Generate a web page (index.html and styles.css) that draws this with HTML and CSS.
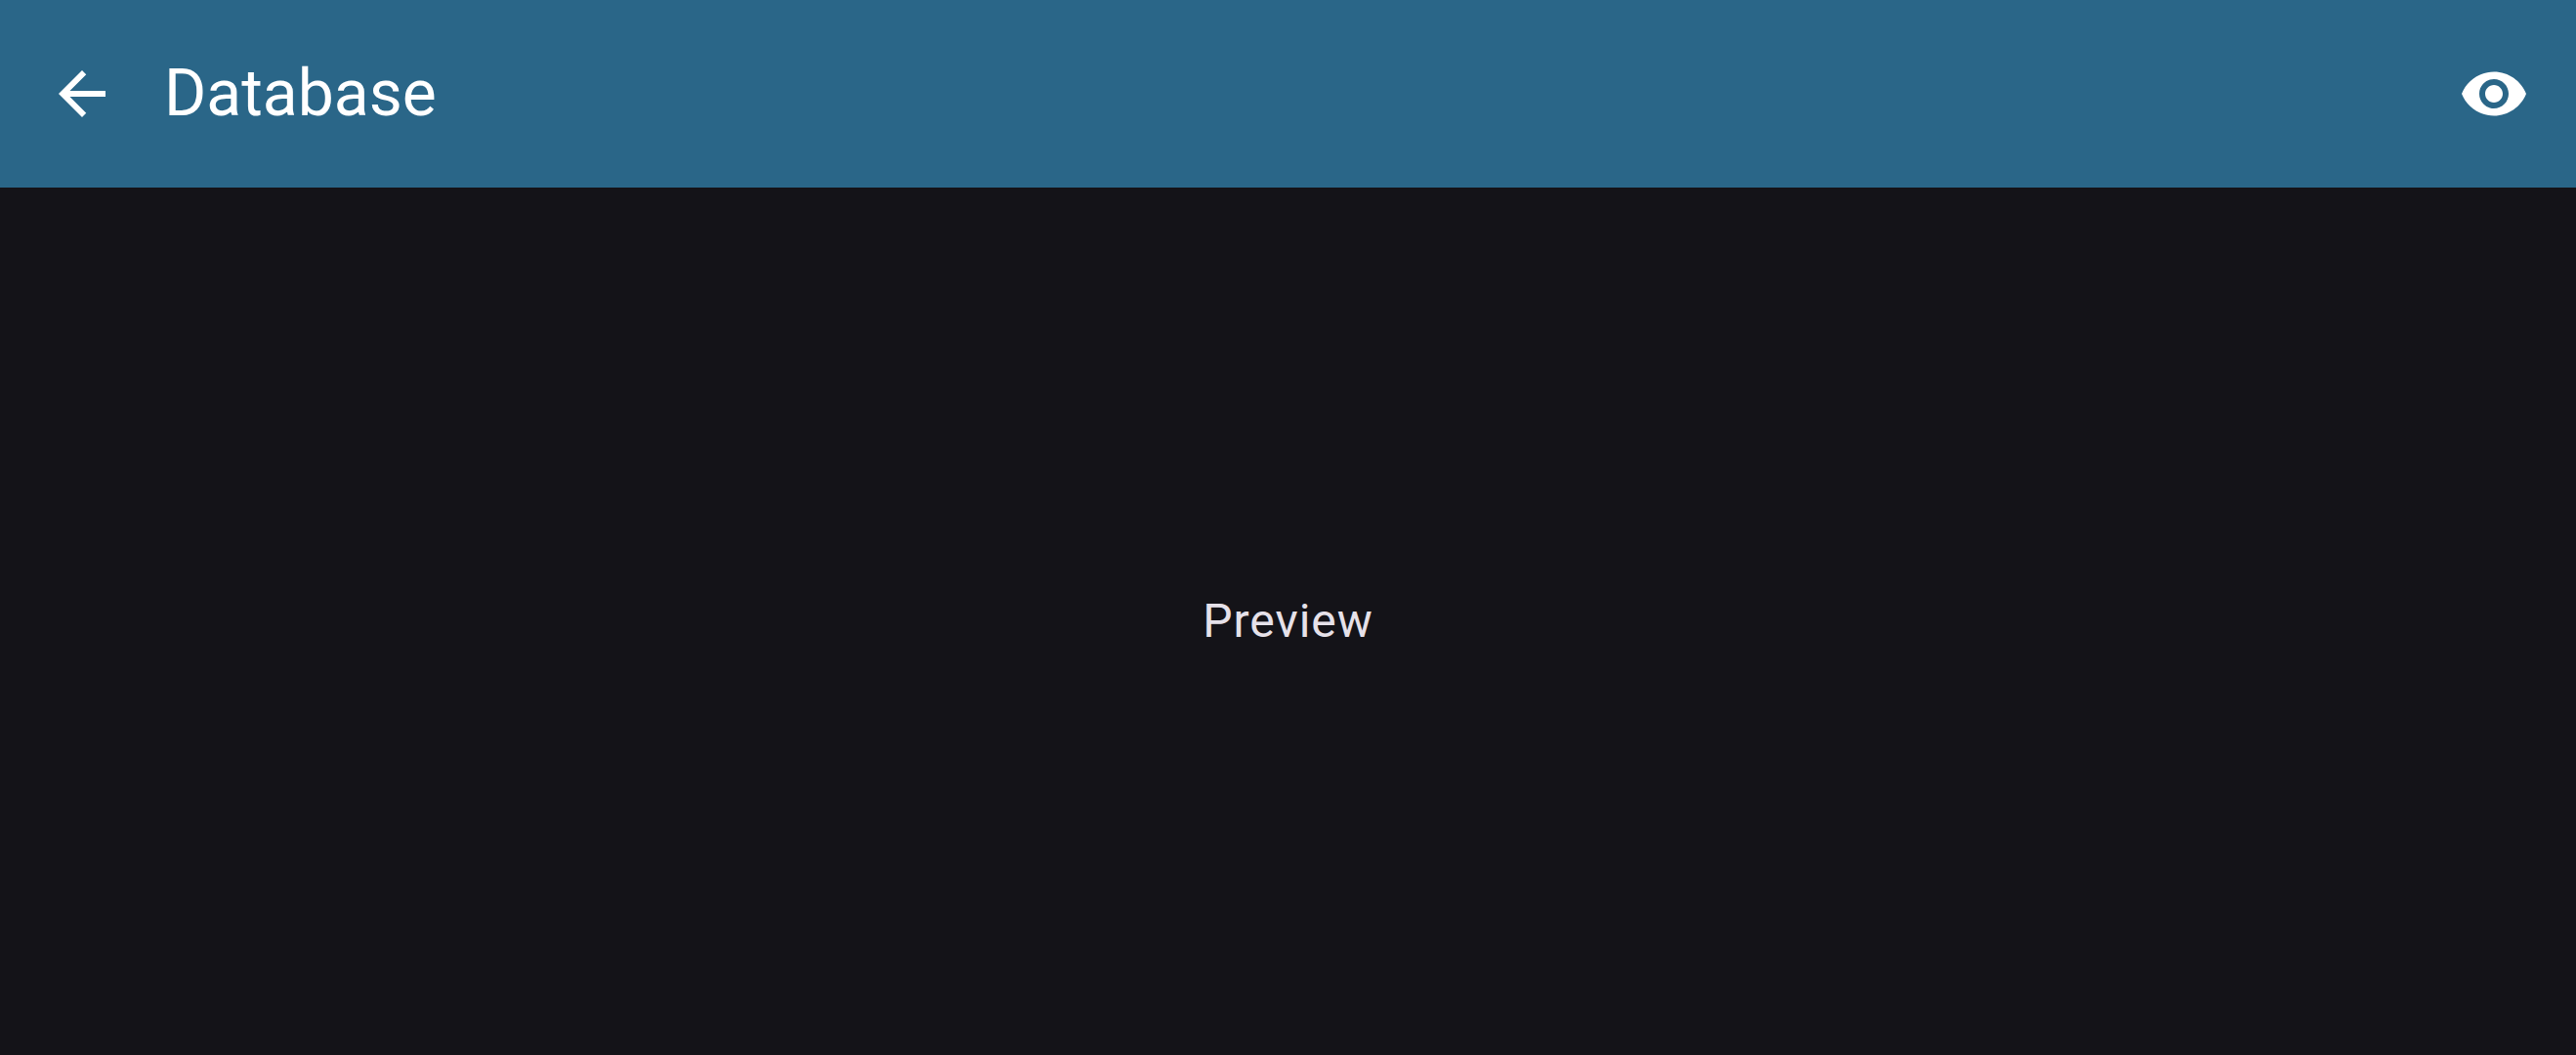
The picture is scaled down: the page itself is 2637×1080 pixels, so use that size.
FILE: index.html
```html
<!DOCTYPE html>
<html lang="en">
<head>
  <meta charset="utf-8">
  <meta name="viewport" content="width=device-width, initial-scale=1">
  <title>Database</title>
  <link rel="stylesheet" href="styles.css">
</head>
<body>
  <header class="app-bar">
    <button class="icon-button" type="button" aria-label="Back">
      <svg class="icon" viewBox="0 0 24 24" aria-hidden="true"><path d="M20 11H7.83l5.59-5.59L12 4l-8 8 8 8 1.41-1.41L7.83 13H20v-2z"/></svg>
    </button>
    <h1 class="title">Database</h1>
    <button class="icon-button" type="button" aria-label="Toggle visibility">
      <svg class="icon" viewBox="0 0 24 24" aria-hidden="true"><path d="M12 4.5C7 4.5 2.73 7.61 1 12c1.73 4.39 6 7.5 11 7.5s9.270-3.110 11-7.500c-1.730-4.390-6-7.500-11-7.500zM12 17c-2.760 0-5-2.240-5-5s2.240-5 5-5 5 2.240 5 5-2.240 5-5 5zm0-8c-1.660 0-3 1.340-3 3s1.340 3 3 3 3-1.340 3-3-1.340-3-3-3z"/></svg>
    </button>
  </header>
  <main class="content">
    <p class="preview">Preview</p>
  </main>
</body>
</html>
```
FILE: styles.css
```css
* {
  box-sizing: border-box;
}

body {
  display: flex;
  flex-direction: column;
  min-height: 100vh;
  margin: 0;
  background: #141318;
  color: #e6e1e9;
  font-family: Roboto, sans-serif;
}

.app-bar {
  display: flex;
  align-items: center;
  gap: 12px;
  padding: 24px 12px;
  background: #2a6688;
  color: #fff;
}

.icon-button {
  display: flex;
  flex: none;
  padding: 36px;
  border: 0;
  border-radius: 50%;
  background: none;
  color: inherit;
  cursor: pointer;
}

.icon {
  width: 72px;
  height: 72px;
  fill: currentColor;
}

.title {
  flex: 1;
  margin: 0;
  font-size: 66px;
  font-weight: 400;
  line-height: 84px;
}

.content {
  display: flex;
  flex: 1;
  align-items: center;
  justify-content: center;
}

.preview {
  margin: 0;
  font-size: 48px;
  line-height: 72px;
  letter-spacing: 1px;
}
```
